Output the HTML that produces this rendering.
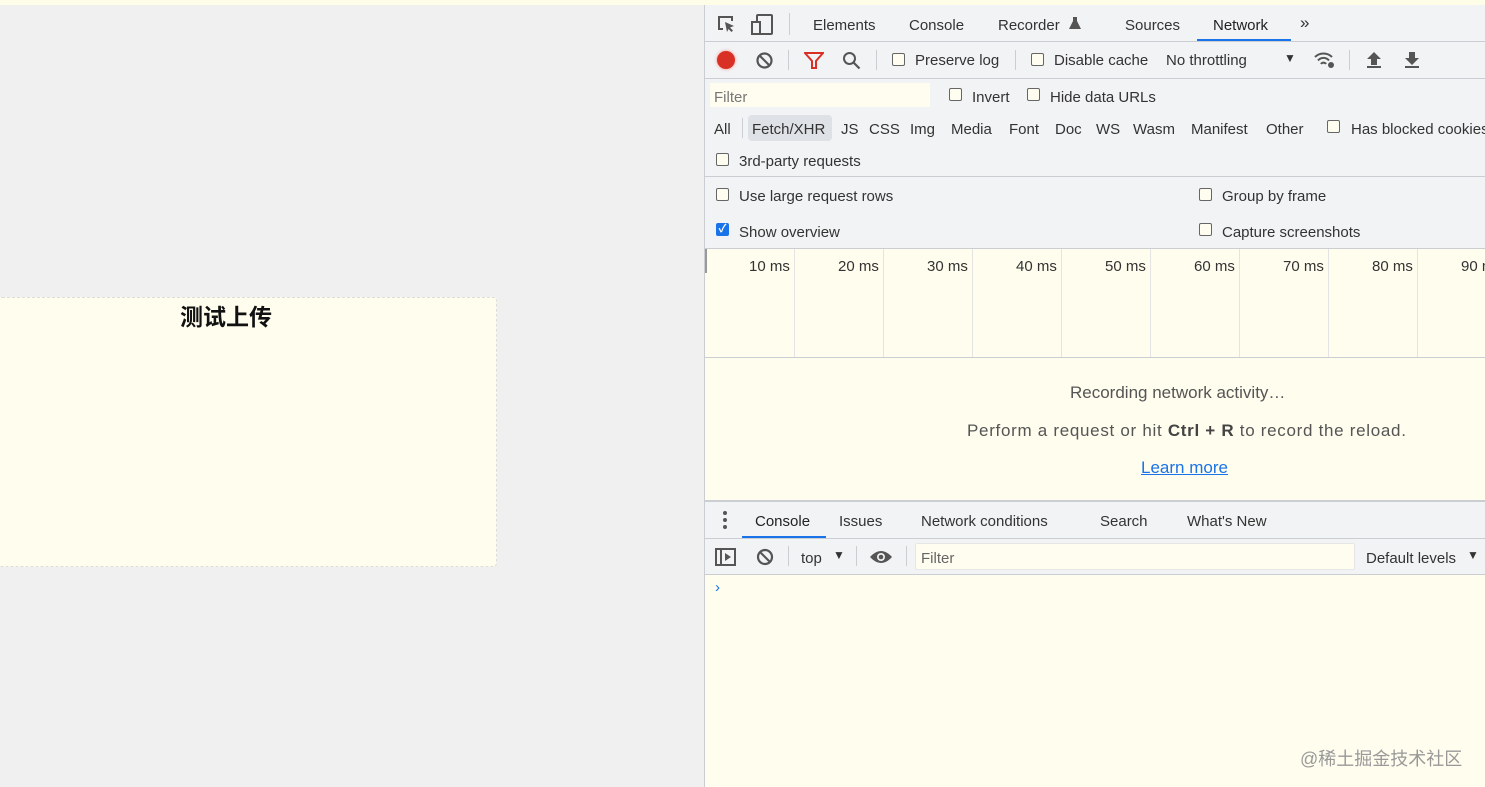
<!DOCTYPE html><html><head><meta charset="utf-8"><style>
*{box-sizing:border-box;margin:0;padding:0}
body{width:1485px;height:787px;overflow:hidden;background:#f0f0f0;font-family:"Liberation Sans","Noto Sans CJK SC",sans-serif;font-size:15px;color:#333;position:relative}
.a{position:absolute;white-space:nowrap}
.cb{position:absolute;width:13px;height:13px;border:1px solid #666;border-radius:2px;background:#fffdf0}
.hl{position:absolute;height:1px;background:#cacdd1}
.vl{position:absolute;width:1px;background:#cacdd1}
</style></head><body>
<div class="a" style="left:0;top:0;width:1485px;height:5px;background:#fdfde8"></div>
<div class="a" style="left:-2px;top:297px;width:499px;height:270px;background:#fffdee;border:1px dashed #ddd;border-radius:4px"></div>
<div class="a" style="left:180px;top:298px;font-size:23px;font-weight:bold;color:#111">测试上传</div>

<div class="a" style="left:704px;top:5px;width:781px;height:782px;background:#f1f3f4;border-left:1px solid #cacdd1"></div>
<svg class="a" style="left:716px;top:14px" width="60" height="22"><path d="M7 15H3V3h13v4" fill="none" stroke="#555" stroke-width="2"/><path d="M9 8l9 4-4 1.5 3 3-1.5 1.5-3-3L11 18z" fill="#555"/><rect x="41" y="1" width="15" height="19" rx="1" fill="none" stroke="#555" stroke-width="2"/><rect x="36" y="8" width="8" height="12" fill="#f1f3f4" stroke="#555" stroke-width="2"/></svg>
<div class="vl" style="left:789px;top:13px;height:22px"></div>
<div class="a" style="left:813px;top:17px">Elements</div>
<div class="a" style="left:909px;top:17px">Console</div>
<div class="a" style="left:998px;top:17px">Recorder</div>
<svg class="a" style="left:1069px;top:16px" width="12" height="14"><path d="M4 1h4v4l4 8H0l4-8z" fill="#555"/></svg>
<div class="a" style="left:1125px;top:17px">Sources</div>
<div class="a" style="left:1213px;top:17px;color:#222">Network</div>
<div class="a" style="left:1197px;top:39px;width:94px;height:2px;background:#1a73e8"></div>
<div class="a" style="left:1300px;top:13px;font-size:17px">»</div>
<div class="hl" style="left:705px;top:41px;width:780px"></div>
<div class="a" style="left:717px;top:51px;width:18px;height:18px;border-radius:50%;background:#d93025;box-shadow:0 0 3px #f88"></div>
<svg class="a" style="left:756px;top:52px" width="17" height="17"><circle cx="8.5" cy="8.5" r="7" fill="none" stroke="#555" stroke-width="2.2"/><path d="M3.5 3.5l10 10" stroke="#555" stroke-width="2.2"/></svg>
<div class="vl" style="left:788px;top:50px;height:20px"></div>
<svg class="a" style="left:804px;top:52px" width="20" height="17"><path d="M1 1h18l-7 8v7h-4v-7z" fill="none" stroke="#d93025" stroke-width="2"/></svg>
<svg class="a" style="left:842px;top:51px" width="19" height="19"><circle cx="7.5" cy="7.5" r="5.5" fill="none" stroke="#555" stroke-width="2"/><path d="M11.5 11.5l6 6" stroke="#555" stroke-width="2.2"/></svg>
<div class="vl" style="left:876px;top:50px;height:20px"></div>
<div class="cb" style="left:892px;top:53px"></div><div class="a" style="left:915px;top:52px">Preserve log</div>
<div class="vl" style="left:1015px;top:50px;height:20px"></div>
<div class="cb" style="left:1031px;top:53px"></div><div class="a" style="left:1054px;top:52px">Disable cache</div>
<div class="a" style="left:1166px;top:52px">No throttling</div>
<div class="a" style="left:1284px;top:51px;font-size:12px">▼</div>
<svg class="a" style="left:1313px;top:50px" width="24" height="20"><path d="M2 7a12 12 0 0 1 17 0M5 10.5a7 7 0 0 1 11 0M8 14a3 3 0 0 1 5 0" fill="none" stroke="#555" stroke-width="2"/><circle cx="18" cy="15" r="3" fill="#555"/></svg>
<div class="vl" style="left:1349px;top:50px;height:20px"></div>
<svg class="a" style="left:1366px;top:51px" width="16" height="18"><path d="M8 1l7 7h-4v6H5V8H1z" fill="#555"/><rect x="1" y="15" width="14" height="2" fill="#555"/></svg>
<svg class="a" style="left:1404px;top:51px" width="16" height="18"><path d="M8 14l7-7h-4V1H5v6H1z" fill="#555"/><rect x="1" y="15" width="14" height="2" fill="#555"/></svg>
<div class="hl" style="left:705px;top:78px;width:780px"></div>
<div class="a" style="left:710px;top:83px;width:220px;height:24px;background:#fffdf0"></div>
<div class="a" style="left:714px;top:89px;color:#777">Filter</div>
<div class="cb" style="left:949px;top:88px"></div><div class="a" style="left:972px;top:89px">Invert</div>
<div class="cb" style="left:1027px;top:88px"></div><div class="a" style="left:1050px;top:89px">Hide data URLs</div>
<div class="a" style="left:714px;top:121px">All</div>
<div class="vl" style="left:742px;top:118px;height:20px"></div>
<div class="a" style="left:748px;top:115px;width:84px;height:26px;background:#dee1e5;border-radius:4px"></div>
<div class="a" style="left:752px;top:121px">Fetch/XHR</div>
<div class="a" style="left:841px;top:121px">JS</div>
<div class="a" style="left:869px;top:121px">CSS</div>
<div class="a" style="left:910px;top:121px">Img</div>
<div class="a" style="left:951px;top:121px">Media</div>
<div class="a" style="left:1009px;top:121px">Font</div>
<div class="a" style="left:1055px;top:121px">Doc</div>
<div class="a" style="left:1096px;top:121px">WS</div>
<div class="a" style="left:1133px;top:121px">Wasm</div>
<div class="a" style="left:1191px;top:121px">Manifest</div>
<div class="a" style="left:1266px;top:121px">Other</div>
<div class="cb" style="left:1327px;top:120px"></div><div class="a" style="left:1351px;top:121px">Has blocked cookies</div>
<div class="cb" style="left:716px;top:153px"></div><div class="a" style="left:739px;top:153px">3rd-party requests</div>
<div class="hl" style="left:705px;top:176px;width:780px"></div>
<div class="cb" style="left:716px;top:188px"></div><div class="a" style="left:739px;top:188px">Use large request rows</div>
<div class="cb" style="left:1199px;top:188px"></div><div class="a" style="left:1222px;top:188px">Group by frame</div>
<div class="a" style="left:716px;top:223px;width:13px;height:13px;border-radius:2px;background:#1a73e8;color:#fff;font-size:11px;line-height:13px;text-align:center;font-weight:bold">✓</div><div class="a" style="left:739px;top:224px">Show overview</div>
<div class="cb" style="left:1199px;top:223px"></div><div class="a" style="left:1222px;top:224px">Capture screenshots</div>
<div class="hl" style="left:705px;top:248px;width:780px"></div>
<div class="a" style="left:705px;top:249px;width:780px;height:252px;background:#fffdee"></div>
<div class="a" style="left:705px;top:249px;width:2px;height:24px;background:#999"></div>
<div class="hl" style="left:705px;top:357px;width:780px"></div>
<div class="vl" style="left:794px;top:249px;height:108px;background:#e4e4e4"></div><div class="a" style="left:749px;top:258px">10 ms</div>
<div class="vl" style="left:883px;top:249px;height:108px;background:#e4e4e4"></div><div class="a" style="left:838px;top:258px">20 ms</div>
<div class="vl" style="left:972px;top:249px;height:108px;background:#e4e4e4"></div><div class="a" style="left:927px;top:258px">30 ms</div>
<div class="vl" style="left:1061px;top:249px;height:108px;background:#e4e4e4"></div><div class="a" style="left:1016px;top:258px">40 ms</div>
<div class="vl" style="left:1150px;top:249px;height:108px;background:#e4e4e4"></div><div class="a" style="left:1105px;top:258px">50 ms</div>
<div class="vl" style="left:1239px;top:249px;height:108px;background:#e4e4e4"></div><div class="a" style="left:1194px;top:258px">60 ms</div>
<div class="vl" style="left:1328px;top:249px;height:108px;background:#e4e4e4"></div><div class="a" style="left:1283px;top:258px">70 ms</div>
<div class="vl" style="left:1417px;top:249px;height:108px;background:#e4e4e4"></div><div class="a" style="left:1372px;top:258px">80 ms</div>
<div class="a" style="left:1461px;top:258px">90 ms</div>
<div class="a" style="left:1070px;top:383px;font-size:17px;color:#555">Recording network activity…</div>
<div class="a" style="left:967px;top:421px;font-size:17px;color:#555;letter-spacing:0.7px">Perform a request or hit <b style="color:#444">Ctrl + R</b> to record the reload.</div>
<div class="a" style="left:1141px;top:458px;font-size:17px;color:#1a73e8;text-decoration:underline">Learn more</div>
<div class="hl" style="left:705px;top:500px;width:780px;height:2px"></div>
<div class="a" style="left:723px;top:511px;width:4px;height:4px;border-radius:50%;background:#555;box-shadow:0 7px 0 #555,0 14px 0 #555"></div>
<div class="a" style="left:755px;top:513px;color:#222">Console</div>
<div class="a" style="left:742px;top:536px;width:84px;height:2px;background:#1a73e8"></div>
<div class="a" style="left:839px;top:513px">Issues</div>
<div class="a" style="left:921px;top:513px">Network conditions</div>
<div class="a" style="left:1100px;top:513px">Search</div>
<div class="a" style="left:1187px;top:513px">What's New</div>
<div class="hl" style="left:705px;top:538px;width:780px"></div>
<svg class="a" style="left:715px;top:548px" width="22" height="18"><rect x="1" y="1" width="19" height="16" fill="none" stroke="#555" stroke-width="2"/><path d="M6 1v16" stroke="#555" stroke-width="2"/><path d="M10 5l6 4-6 4z" fill="#555"/></svg>
<svg class="a" style="left:756px;top:548px" width="18" height="18"><circle cx="9" cy="9" r="7" fill="none" stroke="#555" stroke-width="2.2"/><path d="M4 4l10 10" stroke="#555" stroke-width="2.2"/></svg>
<div class="vl" style="left:788px;top:546px;height:20px"></div>
<div class="a" style="left:801px;top:550px">top</div><div class="a" style="left:833px;top:548px;font-size:12px">▼</div>
<div class="vl" style="left:856px;top:546px;height:20px"></div>
<svg class="a" style="left:869px;top:549px" width="24" height="16"><path d="M1 8Q12 -4 23 8Q12 20 1 8z" fill="#555"/><circle cx="12" cy="8" r="4" fill="#f1f3f4"/><circle cx="12" cy="8" r="2.3" fill="#555"/></svg>
<div class="vl" style="left:906px;top:546px;height:20px"></div>
<div class="a" style="left:915px;top:543px;width:440px;height:27px;background:#fffdf0;border:1px solid #e6e6e6;border-radius:2px"></div>
<div class="a" style="left:921px;top:550px;color:#666">Filter</div>
<div class="a" style="left:1366px;top:550px">Default levels</div><div class="a" style="left:1467px;top:548px;font-size:12px">▼</div>
<div class="hl" style="left:705px;top:574px;width:780px"></div>
<div class="a" style="left:705px;top:575px;width:780px;height:212px;background:#fffdee"></div>
<div class="a" style="left:715px;top:579px;color:#1a73e8;font-size:15px">›</div>
<div class="a" style="left:1300px;top:745px;font-size:18px;color:#999">@稀土掘金技术社区</div>
</body></html>
